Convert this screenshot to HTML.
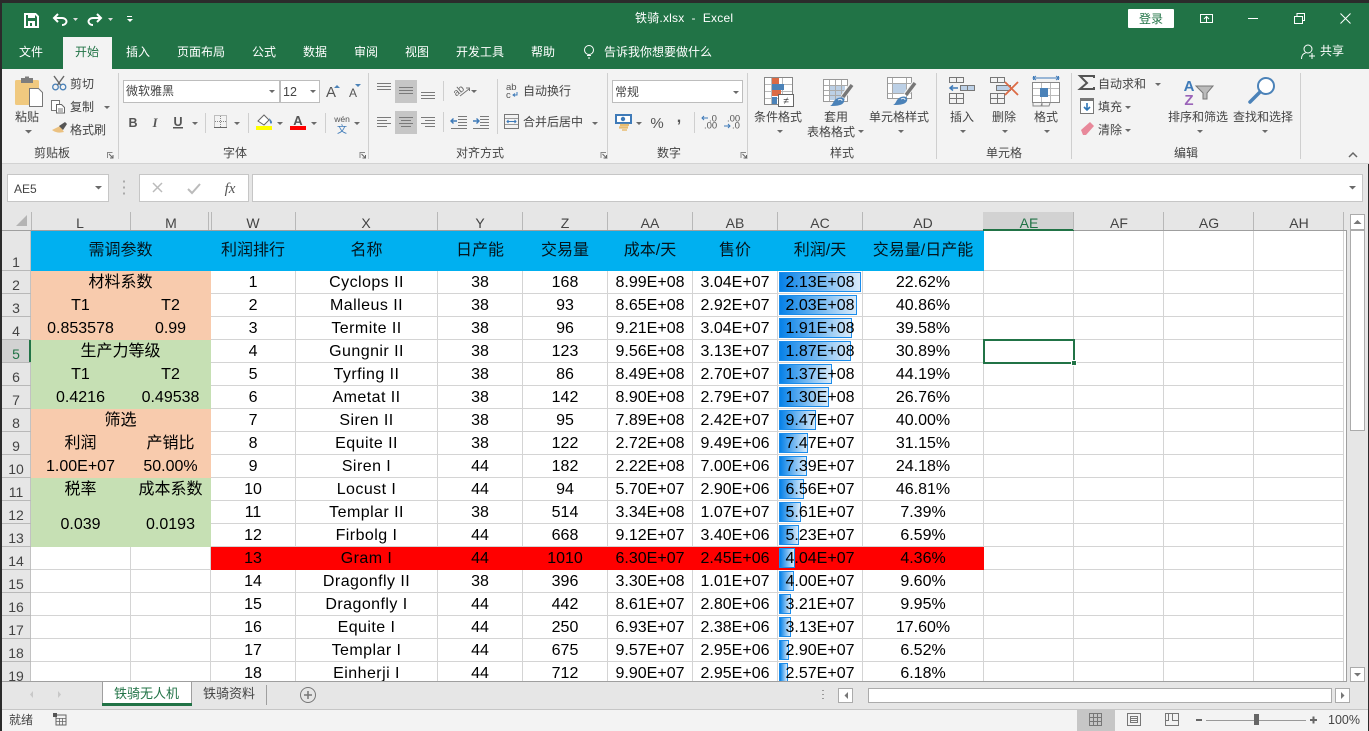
<!DOCTYPE html>
<html lang="zh"><head><meta charset="utf-8"><title>铁骑.xlsx - Excel</title>
<style>
html,body{margin:0;padding:0;width:1369px;height:731px;overflow:hidden;background:#e6e6e6}
body{position:relative;font-family:"Liberation Sans","Noto Sans CJK SC",sans-serif}
svg{position:absolute;left:0;top:0;font-family:"Liberation Sans","Noto Sans CJK SC",sans-serif}
svg text{white-space:pre}
.w{fill:#fff;font-size:12px}
.k{fill:#444;font-size:12px}
.m{text-anchor:middle}
.cr{fill:#6a6a6a}
.ln{stroke:#7a7a7a;stroke-width:1;fill:none}
.hd{fill:#444;font-size:14px;text-anchor:middle}
.rn{fill:#444;font-size:14px;text-anchor:middle}
#sheet{position:absolute;left:31px;top:231px;width:1315px;height:450px;overflow:hidden;background:#fff}
table{border-collapse:separate;border-spacing:0;table-layout:fixed;width:1313px}
td{box-sizing:border-box;height:23px;padding:2px 0 0;border-right:1px solid #d4d4d4;border-bottom:1px solid #d4d4d4;text-align:center;vertical-align:middle;font-size:16px;line-height:20px;color:#000;white-space:nowrap;overflow:visible}
tr:not(.h) td:nth-last-child(11){letter-spacing:.45px}
tr.h td{height:40px;padding-top:1px;background:#00b0f0;border-color:#00b0f0;color:#04141c}
tr.h td.e{background:#fff;border-color:#d4d4d4}
.p{background:#f8cbad;border-color:#f8cbad}
.g{background:#c6e0b4;border-color:#c6e0b4}
tr.r td{background:#f00;border-color:#f00}
tr.r td.e{background:#fff;border-color:#d4d4d4}
td.a{position:relative;isolation:isolate}
td.a i{position:absolute;left:1px;top:1px;height:20px;box-sizing:border-box;border:1px solid #1a8ceb;background:linear-gradient(90deg,#0681e8,#d9ebfa);z-index:-1}
#sel{position:absolute;left:983px;top:339px;width:92px;height:25px;box-sizing:border-box;border:2px solid #217346}
#hdl{position:absolute;left:1071px;top:360px;width:6px;height:6px;background:#217346;border:1px solid #fff;box-sizing:border-box}
</style></head><body>
<svg width="1369" height="731" viewBox="0 0 1369 731">
<!-- frame & title -->
<rect width="1369" height="731" fill="#e6e6e6"/>
<rect x="2" y="3" width="1367" height="66" fill="#217346"/>
<rect x="2" y="69" width="1367" height="94" fill="#f3f3f3"/>
<rect x="2" y="163" width="1367" height="1" fill="#d2d2d2"/>
<!-- QAT -->
<path d="M25 14h10.500l2.500 2.500V27H25z" fill="none" stroke="#fff" stroke-width="2"/><rect x="28" y="14" width="7" height="4" fill="#fff"/><rect x="28" y="21" width="7" height="6" fill="#fff"/><rect x="30" y="23" width="2" height="3" fill="#217346"/>
<path d="M58 14l-4 4 4 4M54 18h8c3 0 4.500 2 4.500 3.500S65 25 62 25" fill="none" stroke="#fff" stroke-width="2"/>
<path d="M73 18h5l-2.500 3z" fill="#ddd"/>
<path d="M97 14l4 4-4 4M101 18h-8c-3 0-4.500 2-4.500 3.500S90 25 93 25" fill="none" stroke="#fff" stroke-width="2"/>
<path d="M108 18h5l-2.500 3z" fill="#ddd"/>
<rect x="127" y="16" width="5" height="1" fill="#fff"/><path d="M127 19h6l-3 3z" fill="#fff"/>
<text x="684" y="22" class="w m" textLength="98">铁骑.xlsx  -  Excel</text>
<rect x="1128" y="9" width="46" height="19" rx="1" fill="#fff"/><text x="1151" y="23" font-size="12" fill="#217346" class="m">登录</text>
<rect x="1200.500" y="14.500" width="12" height="8" fill="none" stroke="#fff"/><path d="M1200 14.500h13M1206.500 22v-5M1204 19l2.500-2.500L1209 19" fill="none" stroke="#fff"/>
<rect x="1248" y="18" width="10" height="1" fill="#fff"/>
<rect x="1294.500" y="16.500" width="8" height="7" fill="none" stroke="#fff"/><path d="M1297 16v-2.500h7.500v7h-2" fill="none" stroke="#fff"/>
<path d="M1340.500 13.500l10 10M1350.500 13.500l-10 10" stroke="#fff" fill="none"/>
<!-- tabs -->
<rect x="63" y="37" width="49" height="32" fill="#f3f3f3"/>
<text x="19" y="56" class="w">文件</text><text x="75" y="56" font-size="12" fill="#217346">开始</text>
<text x="126" y="56" class="w">插入</text><text x="177" y="56" class="w">页面布局</text><text x="252" y="56" class="w">公式</text><text x="303" y="56" class="w">数据</text><text x="354" y="56" class="w">审阅</text><text x="405" y="56" class="w">视图</text><text x="456" y="56" class="w">开发工具</text><text x="531" y="56" class="w">帮助</text>
<circle cx="589" cy="50" r="4.500" fill="none" stroke="#fff"/><path d="M587 55.500h4M588 58h2" stroke="#fff"/>
<text x="604" y="56" class="w">告诉我你想要做什么</text>
<circle cx="1308" cy="49" r="4" fill="none" stroke="#fff"/><path d="M1301.500 59c0-4 2-5.500 4-6M1309 56h6M1312 53v6" fill="none" stroke="#fff"/>
<text x="1320" y="55" class="w">共享</text>
<!-- separators -->
<g fill="#cfcfcf"><rect x="118" y="73" width="1" height="86"/><rect x="368" y="73" width="1" height="86"/><rect x="607" y="73" width="1" height="86"/><rect x="747" y="73" width="1" height="86"/><rect x="936" y="73" width="1" height="86"/><rect x="1071" y="73" width="1" height="86"/><rect x="1300" y="73" width="1" height="86"/>
<rect x="205" y="113" width="1" height="20"/><rect x="248" y="113" width="1" height="20"/><rect x="325" y="113" width="1" height="20"/><rect x="443" y="81" width="1" height="20"/><rect x="443" y="112" width="1" height="20"/><rect x="497" y="79" width="1" height="55"/><rect x="694" y="112" width="1" height="21"/></g>
<!-- group labels -->
<text x="52" y="157" class="k m">剪贴板</text><text x="235" y="157" class="k m">字体</text><text x="480" y="157" class="k m">对齐方式</text><text x="669" y="157" class="k m">数字</text><text x="842" y="157" class="k m">样式</text><text x="1004" y="157" class="k m">单元格</text><text x="1186" y="157" class="k m">编辑</text>
<g fill="none" stroke="#888"><path d="M107.500 158v-5.500h5M601 158v-5.500h5M741 158v-5.500h5M360 158v-5.500h5"/><path d="M109 154l4 4M113 155v3h-3M602.500 154l4 4M606.500 155v3h-3M742.500 154l4 4M746.500 155v3h-3M361.500 154l4 4M365.500 155v3h-3" stroke="#666"/></g>
<!-- clipboard -->
<rect x="15" y="80" width="24" height="25" rx="1.500" fill="#f0c97f"/><rect x="21" y="78" width="12" height="5" fill="#7d7d7d"/><rect x="25" y="76.500" width="4" height="3" fill="#7d7d7d"/>
<path d="M29.500 88.500h9l4 4v14h-13z" fill="#fff" stroke="#777"/>
<text x="27" y="121" class="k m">粘贴</text><path d="M25 130h7l-3.500 3.500z" class="cr"/>
<g fill="none" stroke="#4b82b8" stroke-width="1.300"><circle cx="55.500" cy="87" r="2.800"/><circle cx="63" cy="87" r="2.800"/></g><path d="M54 76l6.500 9M64 76l-6.500 9" stroke="#666" stroke-width="1.400"/>
<text x="70" y="88" class="k">剪切</text>
<rect x="51.500" y="100.500" width="8" height="10" fill="#fff" stroke="#777"/><path d="M56.500 104.500h5l3 3v5.500h-8z" fill="#fff" stroke="#666"/><path d="M58 109h5M58 111h5" stroke="#777"/>
<text x="70" y="111" class="k">复制</text><path d="M104 106h6l-3 3z" class="cr"/>
<path d="M52 130l8-4 4 6c-4 1-8 1-12-2z" fill="#ebc180"/><path d="M59 126l6-4 2 2-4 6z" fill="#555"/>
<text x="70" y="134" class="k">格式刷</text>
<!-- font -->
<rect x="123.500" y="80.500" width="156" height="22" fill="#fff" stroke="#bdbdbd"/><rect x="280.500" y="80.500" width="39" height="22" fill="#fff" stroke="#bdbdbd"/>
<text x="126" y="95" class="k">微软雅黑</text><text x="283" y="96" font-size="12.500" fill="#444">12</text>
<path d="M269 90h6l-3 3zM310 90h6l-3 3z" class="cr"/>
<text x="331" y="97" font-size="15" fill="#555" class="m">A</text><path d="M334 88l3-3 3 3z" fill="#4b82b8"/>
<text x="353" y="97" font-size="12" fill="#555" class="m">A</text><path d="M355 84h6l-3 3z" fill="#4b82b8"/>
<text x="133" y="127" font-size="12.500" font-weight="bold" fill="#555" class="m">B</text>
<text x="155" y="127" font-size="12.500" font-style="italic" font-family="Liberation Serif" font-weight="bold" fill="#555" class="m">I</text>
<text x="178" y="126" font-size="12.500" font-weight="bold" fill="#555" class="m">U</text><rect x="173" y="127" width="10" height="1.500" fill="#555"/>
<path d="M192 122h6l-3 3zM234 122h6l-3 3zM277 122h6l-3 3zM311 122h6l-3 3zM354 122h6l-3 3z" class="cr"/>
<rect x="214.500" y="115.500" width="12" height="12" fill="none" stroke="#888" stroke-dasharray="1 1"/><path d="M220.500 116v12M215 121.500h12" stroke="#888" stroke-dasharray="1 1"/><rect x="214" y="127" width="13" height="1" fill="#666"/>
<path d="M258 121l6-6 5 5-5 5z" fill="#fff" stroke="#666"/><path d="M269 118c2 2 3 3 3 4.500s-2 1.500-2 0z" fill="#4b82b8"/><rect x="256" y="126" width="16" height="4" fill="#ff0"/>
<text x="298" y="125" font-size="13" font-weight="bold" fill="#555" class="m">A</text><rect x="290" y="126" width="16" height="4" fill="#f00"/>
<text x="342" y="122" font-size="8.500" fill="#555" class="m">wén</text><text x="342" y="133" font-size="10" fill="#3e7ab8" class="m">文</text>
<!-- alignment -->
<rect x="395" y="80" width="22" height="23" fill="#c6c6c6"/><rect x="395" y="111" width="22" height="23" fill="#c6c6c6"/>
<path class="ln" d="M377 83.500h14M377 86.500h14M377 89.500h14M399 87.500h14M399 90.500h14M399 93.500h14M421 92.500h14M421 95.500h14M421 98.500h14"/>
<path class="ln" d="M377 117.500h14M377 120.500h10M377 123.500h14M377 126.500h10M399 117.500h14M401 120.500h10M399 123.500h14M401 126.500h10M421 117.500h14M425 120.500h10M421 123.500h14M425 126.500h10"/>
<text x="458" y="94" font-size="10" fill="#666" transform="rotate(-40 458 90)" class="m">ab</text><path d="M460 96l9-7M466 88h3.500v3" fill="none" stroke="#777"/><path d="M471 90h6l-3 3z" class="cr"/>
<path class="ln" d="M458 116.500h9M458 119.500h9M458 122.500h9M458 125.500h9M451 128.500h16M480 116.500h9M480 119.500h9M480 122.500h9M480 125.500h9M473 128.500h16"/>
<path d="M451 121h6M453.500 118.500l-2.500 2.500 2.500 2.500M473 121h6M476.500 118.500l2.500 2.500-2.500 2.500" fill="none" stroke="#3e7ab8" stroke-width="1.400"/>
<text x="506" y="90" font-size="9.500" fill="#555">ab</text><text x="506" y="98" font-size="9.500" fill="#555">c</text><path d="M517 92v3h-4M515 93.500l-2 1.500 2 1.500" fill="none" stroke="#3e7ab8"/>
<text x="523" y="95" class="k">自动换行</text>
<rect x="504.500" y="114.500" width="14" height="14" fill="none" stroke="#777"/><path d="M505 118.500h13M505 124.500h13" stroke="#999"/><path d="M507 121.500h9M508.500 120l-1.500 1.500 1.500 1.500M514.500 120l1.500 1.500-1.500 1.500" fill="none" stroke="#3e7ab8"/>
<text x="523" y="126" class="k">合并后居中</text><path d="M592 122h6l-3 3z" class="cr"/>
<!-- number -->
<rect x="612.500" y="80.500" width="130" height="22" fill="#fff" stroke="#bdbdbd"/><text x="615" y="96" class="k">常规</text><path d="M733 91h6l-3 3z" class="cr"/>
<rect x="616" y="115" width="15" height="8" fill="#fff" stroke="#3e7ab8" stroke-width="2"/><circle cx="623" cy="119" r="2.200" fill="#3e7ab8"/><path d="M620 125h9M619 127.500h9" stroke="#e8bd72" stroke-width="2.200"/><path d="M622 130h5" stroke="#e8bd72" stroke-width="1.500"/>
<path d="M636 122h6l-3 3z" class="cr"/>
<text x="657" y="128" font-size="15" fill="#555" class="m">%</text><text x="679" y="122" font-size="16" font-weight="bold" fill="#555" class="m">,</text>
<text x="709" y="121.500" font-size="9.500" fill="#555">.0</text><text x="704" y="128.500" font-size="9.500" fill="#555">.00</text><path d="M702 118h6M704 116l-2 2 2 2" fill="none" stroke="#3e7ab8"/>
<text x="727" y="121.500" font-size="9.500" fill="#555">.00</text><text x="732" y="128.500" font-size="9.500" fill="#555">.0</text><path d="M724 126h6M728 124l2 2-2 2" fill="none" stroke="#3e7ab8"/>
<!-- styles -->
<rect x="764.500" y="77.500" width="28" height="27" fill="#fff" stroke="#888"/><path d="M771.500 78v26M782.500 78v26M765 84.500h27M765 91.500h27M765 98.500h27" stroke="#bbb"/>
<rect x="772" y="78" width="7" height="6" fill="#dc6a44"/><rect x="772" y="84" width="12" height="6" fill="#4b82b8"/><rect x="772" y="90" width="9" height="6" fill="#dc6a44"/><rect x="772" y="97" width="5" height="7" fill="#4b82b8"/>
<rect x="778.500" y="94.500" width="15" height="12" fill="#fff" stroke="#666"/><text x="786" y="104" font-size="10" fill="#444" class="m">≠</text>
<text x="778" y="121" class="k m">条件格式</text><path d="M777 130h6l-3 3z" class="cr"/>
<rect x="823.500" y="79.500" width="24" height="22" fill="#fff" stroke="#999"/><rect x="829" y="85" width="16" height="15" fill="#bcd0e6"/><path d="M829.500 80v21M835.500 80v21M841.500 80v21M824 85.500h23M824 90.500h23M824 95.500h23" stroke="#aaa"/>
<path d="M851 86l-8 11" stroke="#f3f3f3" stroke-width="5.500"/><path d="M852 85l-9 12" stroke="#777" stroke-width="3.500"/>
<path d="M830 106c3-1 3-5 6-7 3-2 7-2 8 0 1 3-1 5-4 6-3 1-7 1-10 1z" fill="#4b82b8"/><path d="M838 100c2-1 4-1 4 1" stroke="#dfe9f3" fill="none"/>
<text x="836" y="121" class="k m">套用</text><text x="807" y="136" class="k">表格格式</text><path d="M858 130h6l-3 3z" class="cr"/>
<rect x="887.500" y="77.500" width="24" height="21" fill="#fff" stroke="#999"/><path d="M888 83.500h23M892.500 78v20M906.500 78v20M888 93.500h23" stroke="#aaa"/><rect x="893" y="84" width="13" height="9" fill="#bcd0e6"/>
<path d="M914 84l-8 11" stroke="#f3f3f3" stroke-width="5.500"/><path d="M915 83l-9 12" stroke="#777" stroke-width="3.500"/>
<path d="M893 105c3-1 3-5 6-7 3-2 7-2 8 0 1 3-1 5-4 6-3 1-7 1-10 1z" fill="#4b82b8"/><path d="M901 99c2-1 4-1 4 1" stroke="#dfe9f3" fill="none"/>
<text x="899" y="121" class="k m">单元格样式</text><path d="M898 130h6l-3 3z" class="cr"/>
<!-- cells -->
<g fill="none" stroke="#777"><rect x="949.500" y="77.500" width="7" height="5"/><rect x="956.500" y="77.500" width="7" height="5"/><rect x="949.500" y="93.500" width="7" height="5"/><rect x="956.500" y="93.500" width="7" height="5"/><rect x="949.500" y="98.500" width="7" height="5"/><rect x="956.500" y="98.500" width="7" height="5"/></g>
<rect x="960.500" y="85.500" width="14" height="5" fill="#bcd0e6" stroke="#777"/><path d="M967.500 85.500v5" stroke="#777"/><path d="M950 88h8M953 85.500l-3 2.500 3 2.500" fill="none" stroke="#3e7ab8" stroke-width="1.500"/>
<text x="962" y="121" class="k m">插入</text><path d="M960 130h6l-3 3z" class="cr"/>
<g fill="none" stroke="#777"><rect x="990.500" y="77.500" width="7" height="5"/><rect x="997.500" y="77.500" width="7" height="5"/><rect x="990.500" y="93.500" width="7" height="5"/><rect x="997.500" y="93.500" width="7" height="5"/><rect x="990.500" y="98.500" width="7" height="5"/><rect x="997.500" y="98.500" width="7" height="5"/></g>
<rect x="996.500" y="85.500" width="14" height="5" fill="#bcd0e6" stroke="#777"/><path d="M1005 82l13 13M1018 82l-13 13" stroke="#dc6a44" stroke-width="1.800"/>
<text x="1004" y="121" class="k m">删除</text><path d="M1002 130h6l-3 3z" class="cr"/>
<path d="M1033 78h26M1033.500 76v4M1058.500 76v4M1036 76l-3 2 3 2M1056 76l3 2-3 2" stroke="#3e7ab8" fill="none"/><rect x="1032.500" y="82.500" width="27" height="20" fill="#fff" stroke="#888"/><path d="M1041.500 83v19M1050.500 83v19M1033 88.500h26M1033 95.500h26" stroke="#bbb"/><rect x="1040" y="88" width="8" height="9" fill="#4b82b8"/>
<path d="M1033 103v3h8l1-3M1042 103v3h7l1-3" fill="none" stroke="#888"/>
<text x="1046" y="121" class="k m">格式</text><path d="M1044 130h6l-3 3z" class="cr"/>
<!-- editing -->
<path d="M1094 78v-2h-14l7 7-7 6h14v-2" fill="none" stroke="#555" stroke-width="2"/>
<text x="1098" y="88" class="k">自动求和</text><path d="M1155 83h6l-3 3z" class="cr"/>
<rect x="1080.500" y="98.500" width="13" height="15" fill="#fff" stroke="#777"/><rect x="1081" y="98" width="12" height="3" fill="#777"/><path d="M1087 103v7M1084 107l3 3 3-3" fill="none" stroke="#2f75b5" stroke-width="1.600"/>
<text x="1098" y="111" class="k">填充</text><path d="M1125 106h6l-3 3z" class="cr"/>
<path d="M1081 130l9-8 4 4-8 9h-3z" fill="#e8889a"/>
<text x="1098" y="134" class="k">清除</text><path d="M1125 129h6l-3 3z" class="cr"/>
<text x="1189" y="91" font-size="15" font-weight="bold" fill="#3e7ab8" class="m">A</text><text x="1189" y="105" font-size="15" font-weight="bold" fill="#9a63b8" class="m">Z</text>
<path d="M1196 86h17l-6 7v6h-4v-6z" fill="#bbb" stroke="#777"/>
<text x="1198" y="121" class="k m">排序和筛选</text><path d="M1197 130h6l-3 3z" class="cr"/>
<circle cx="1266" cy="86" r="8" fill="#fff" stroke="#4b82b8" stroke-width="2"/><path d="M1260 92l-10 10" stroke="#4b82b8" stroke-width="3.500" stroke-linecap="round"/>
<text x="1263" y="121" class="k m">查找和选择</text><path d="M1262 130h6l-3 3z" class="cr"/>
<path d="M1349 157l4-4 4 4" fill="none" stroke="#666" stroke-width="1.500"/>
<!-- formula bar -->
<rect x="7.500" y="174.500" width="101" height="27" fill="#fff" stroke="#c6c6c6"/><text x="14" y="193" font-size="12" fill="#444">AE5</text><path d="M95 186h7l-3.500 3.500z" class="cr"/>
<path d="M124 180.500v2M124 186.500v2M124 192.500v2" stroke="#aaa" stroke-width="2"/>
<rect x="139.500" y="174.500" width="109" height="27" fill="#fff" stroke="#c6c6c6"/>
<path d="M153 183l9 9M162 183l-9 9" stroke="#bbb" stroke-width="1.500"/><path d="M188 189l4 4 8-9" fill="none" stroke="#bbb" stroke-width="2"/>
<text x="230" y="193" font-size="15" font-style="italic" font-family="Liberation Serif" fill="#555" class="m">fx</text>
<rect x="252.500" y="174.500" width="1110" height="27" fill="#fff" stroke="#c6c6c6"/><path d="M1349 186h7l-3.500 3.500z" class="cr"/>
<!-- headers -->
<path d="M16 226h11v-11z" fill="#b4b4b4"/>
<rect x="983" y="212" width="91" height="18" fill="#d2d2d2"/><rect x="983" y="229" width="91" height="2" fill="#217346"/>
<rect x="2" y="230" width="981" height="1" fill="#9f9f9f"/><rect x="1074" y="230" width="273" height="1" fill="#9f9f9f"/>
<g fill="#b8b8b8"><rect x="31" y="212" width="1" height="18"/><rect x="130" y="212" width="1" height="18"/><rect x="208" y="212" width="1" height="18"/><rect x="211" y="212" width="1" height="18"/><rect x="295" y="212" width="1" height="18"/><rect x="437" y="212" width="1" height="18"/><rect x="522" y="212" width="1" height="18"/><rect x="607" y="212" width="1" height="18"/><rect x="692" y="212" width="1" height="18"/><rect x="777" y="212" width="1" height="18"/><rect x="862" y="212" width="1" height="18"/><rect x="1073" y="212" width="1" height="18"/><rect x="1163" y="212" width="1" height="18"/><rect x="1253" y="212" width="1" height="18"/><rect x="1343" y="212" width="1" height="18"/></g>
<text x="80" y="228" class="hd">L</text><text x="171" y="228" class="hd">M</text><text x="253" y="228" class="hd">W</text><text x="366" y="228" class="hd">X</text><text x="480" y="228" class="hd">Y</text><text x="565" y="228" class="hd">Z</text><text x="650" y="228" class="hd">AA</text><text x="735" y="228" class="hd">AB</text><text x="820" y="228" class="hd">AC</text><text x="923" y="228" class="hd">AD</text><text x="1029" y="228" font-size="14" fill="#217346" class="m">AE</text><text x="1119" y="228" class="hd">AF</text><text x="1209" y="228" class="hd">AG</text><text x="1299" y="228" class="hd">AH</text>
<rect x="2" y="340" width="28" height="22" fill="#d2d2d2"/><rect x="29" y="339" width="2" height="24" fill="#217346"/>
<rect x="30.500" y="231" width="1" height="108" fill="#9f9f9f"/><rect x="30.500" y="363" width="1" height="318" fill="#9f9f9f"/>
<g fill="#b8b8b8"><rect x="2" y="270" width="29" height="1"/><rect x="2" y="293" width="29" height="1"/><rect x="2" y="316" width="29" height="1"/><rect x="2" y="339" width="29" height="1"/><rect x="2" y="362" width="29" height="1"/><rect x="2" y="385" width="29" height="1"/><rect x="2" y="408" width="29" height="1"/><rect x="2" y="431" width="29" height="1"/><rect x="2" y="454" width="29" height="1"/><rect x="2" y="477" width="29" height="1"/><rect x="2" y="500" width="29" height="1"/><rect x="2" y="523" width="29" height="1"/><rect x="2" y="546" width="29" height="1"/><rect x="2" y="569" width="29" height="1"/><rect x="2" y="592" width="29" height="1"/><rect x="2" y="615" width="29" height="1"/><rect x="2" y="638" width="29" height="1"/><rect x="2" y="661" width="29" height="1"/></g>
<text x="16" y="267" class="rn">1</text><text x="16" y="290" class="rn">2</text><text x="16" y="313" class="rn">3</text><text x="16" y="336" class="rn">4</text><text x="16" y="359" font-size="14" fill="#217346" class="m">5</text><text x="16" y="382" class="rn">6</text><text x="16" y="405" class="rn">7</text><text x="16" y="428" class="rn">8</text><text x="16" y="451" class="rn">9</text><text x="16" y="474" class="rn">10</text><text x="16" y="497" class="rn">11</text><text x="16" y="520" class="rn">12</text><text x="16" y="543" class="rn">13</text><text x="16" y="566" class="rn">14</text><text x="16" y="589" class="rn">15</text><text x="16" y="612" class="rn">16</text><text x="16" y="635" class="rn">17</text><text x="16" y="658" class="rn">18</text><text x="16" y="681" class="rn">19</text>
<!-- v scrollbar -->
<rect x="1346" y="231" width="1" height="451" fill="#9f9f9f"/>
<rect x="1350.500" y="214.500" width="14" height="15" fill="#fff" stroke="#ababab"/><path d="M1353.500 224l4-4 4 4z" fill="#777"/>
<rect x="1350.500" y="230.500" width="14" height="200" fill="#fff" stroke="#ababab"/>
<rect x="1350.500" y="667.500" width="14" height="14" fill="#fff" stroke="#ababab"/><path d="M1354 673h7l-3.500 3.500z" fill="#777"/>
<rect x="1368" y="164" width="1" height="567" fill="#2b2b2b"/>
<!-- bottom -->
<rect x="2" y="682" width="1366" height="27" fill="#e6e6e6"/><rect x="2" y="681" width="1345" height="1" fill="#9f9f9f"/>
<path d="M33 691v7l-3-3.500zM58 691v7l3-3.500z" fill="#c8c8c8"/>
<path d="M102.500 682v22" stroke="#9f9f9f"/><rect x="103" y="682" width="88" height="21" fill="#fff"/><path d="M191.500 682v22" stroke="#9f9f9f"/><rect x="102" y="703" width="90" height="3" fill="#217346"/>
<text x="146.500" y="698" font-size="13" fill="#217346" class="m">铁骑无人机</text>
<text x="229" y="698" font-size="13" fill="#444" class="m">铁骑资料</text><rect x="266" y="685" width="1" height="20" fill="#9f9f9f"/>
<circle cx="308" cy="695" r="7.500" fill="none" stroke="#777"/><path d="M304 695h8M308 691v8" stroke="#777" stroke-width="1.500"/>
<path d="M823 690v1M823 694v1M823 698v1" stroke="#999" stroke-width="2"/>
<rect x="838.500" y="688.500" width="14" height="14" fill="#fff" stroke="#ababab"/><path d="M848 692v7l-3.500-3.500z" fill="#777"/>
<rect x="868.500" y="688.500" width="463" height="14" fill="#fff" stroke="#ababab"/>
<rect x="1335.500" y="688.500" width="14" height="14" fill="#fff" stroke="#ababab"/><path d="M1341 692v7l3.500-3.500z" fill="#777"/>
<rect x="2" y="709" width="1366" height="22" fill="#f3f3f3"/><rect x="2" y="709" width="1366" height="1" fill="#c6c6c6"/>
<text x="9" y="724" class="k">就绪</text>
<rect x="56" y="715" width="10" height="10" fill="none" stroke="#666"/><path d="M56 718.500h10M59.500 718v7M62.500 718v7M56 721.500h10" stroke="#666" stroke-width=".8"/><rect x="53" y="713" width="4" height="4" fill="#555"/>
<rect x="1077" y="710" width="38" height="21" fill="#c6c6c6"/>
<path d="M1089.500 713.500h12v12h-12zM1093.500 714v12M1097.500 714v12M1090 717.500h12M1090 721.500h12" fill="none" stroke="#777"/>
<rect x="1127.500" y="713.500" width="13" height="12" fill="none" stroke="#777"/><path d="M1130.500 716.500h7v6h-7zM1131 718.500h6M1131 720.500h6" fill="none" stroke="#777"/>
<path d="M1165.500 713.500h13v12h-13zM1165.500 720.500h3v-7M1178.500 720.500h-6v-7" fill="none" stroke="#777"/>
<rect x="1196" y="719" width="6" height="2" fill="#666"/><rect x="1206" y="720" width="100" height="1" fill="#999"/><rect x="1254" y="714" width="5" height="11" fill="#666"/>
<path d="M1310 720h7M1313.500 716.500v7" stroke="#666" stroke-width="2"/>
<text x="1344" y="724" font-size="12.500" fill="#444" class="m">100%</text>
<!-- window edge -->
<rect width="1369" height="3" fill="#2b2b2b"/><rect width="2" height="731" fill="#2b2b2b"/>
</svg>

<div id="sheet"><table>
<colgroup><col style="width:100px"><col style="width:80px"><col style="width:85px"><col style="width:142px"><col style="width:85px"><col style="width:85px"><col style="width:85px"><col style="width:85px"><col style="width:85px"><col style="width:121px"><col style="width:90px"><col style="width:90px"><col style="width:90px"><col style="width:90px"></colgroup>
<tr class="h"><td colspan="2">需调参数</td><td>利润排行</td><td>名称</td><td>日产能</td><td>交易量</td><td>成本/天</td><td>售价</td><td>利润/天</td><td>交易量/日产能</td><td class="e"></td><td class="e"></td><td class="e"></td><td class="e"></td></tr>
<tr><td class="p" colspan="2">材料系数</td><td>1</td><td>Cyclops II</td><td>38</td><td>168</td><td>8.99E+08</td><td>3.04E+07</td><td class="a"><i style="width:82px"></i>2.13E+08</td><td>22.62%</td><td></td><td></td><td></td><td></td></tr>
<tr><td class="p">T1</td><td class="p">T2</td><td>2</td><td>Malleus II</td><td>38</td><td>93</td><td>8.65E+08</td><td>2.92E+07</td><td class="a"><i style="width:78px"></i>2.03E+08</td><td>40.86%</td><td></td><td></td><td></td><td></td></tr>
<tr><td class="p">0.853578</td><td class="p">0.99</td><td>3</td><td>Termite II</td><td>38</td><td>96</td><td>9.21E+08</td><td>3.04E+07</td><td class="a"><i style="width:73px"></i>1.91E+08</td><td>39.58%</td><td></td><td></td><td></td><td></td></tr>
<tr><td class="g" colspan="2">生产力等级</td><td>4</td><td>Gungnir II</td><td>38</td><td>123</td><td>9.56E+08</td><td>3.13E+07</td><td class="a"><i style="width:72px"></i>1.87E+08</td><td>30.89%</td><td></td><td></td><td></td><td></td></tr>
<tr><td class="g">T1</td><td class="g">T2</td><td>5</td><td>Tyrfing II</td><td>38</td><td>86</td><td>8.49E+08</td><td>2.70E+07</td><td class="a"><i style="width:53px"></i>1.37E+08</td><td>44.19%</td><td></td><td></td><td></td><td></td></tr>
<tr><td class="g">0.4216</td><td class="g">0.49538</td><td>6</td><td>Ametat II</td><td>38</td><td>142</td><td>8.90E+08</td><td>2.79E+07</td><td class="a"><i style="width:50px"></i>1.30E+08</td><td>26.76%</td><td></td><td></td><td></td><td></td></tr>
<tr><td class="p" colspan="2">筛选</td><td>7</td><td>Siren II</td><td>38</td><td>95</td><td>7.89E+08</td><td>2.42E+07</td><td class="a"><i style="width:37px"></i>9.47E+07</td><td>40.00%</td><td></td><td></td><td></td><td></td></tr>
<tr><td class="p">利润</td><td class="p">产销比</td><td>8</td><td>Equite II</td><td>38</td><td>122</td><td>2.72E+08</td><td>9.49E+06</td><td class="a"><i style="width:29px"></i>7.47E+07</td><td>31.15%</td><td></td><td></td><td></td><td></td></tr>
<tr><td class="p">1.00E+07</td><td class="p">50.00%</td><td>9</td><td>Siren I</td><td>44</td><td>182</td><td>2.22E+08</td><td>7.00E+06</td><td class="a"><i style="width:28px"></i>7.39E+07</td><td>24.18%</td><td></td><td></td><td></td><td></td></tr>
<tr><td class="g">税率</td><td class="g">成本系数</td><td>10</td><td>Locust I</td><td>44</td><td>94</td><td>5.70E+07</td><td>2.90E+06</td><td class="a"><i style="width:25px"></i>6.56E+07</td><td>46.81%</td><td></td><td></td><td></td><td></td></tr>
<tr><td class="g" rowspan="2">0.039</td><td class="g" rowspan="2">0.0193</td><td>11</td><td>Templar II</td><td>38</td><td>514</td><td>3.34E+08</td><td>1.07E+07</td><td class="a"><i style="width:22px"></i>5.61E+07</td><td>7.39%</td><td></td><td></td><td></td><td></td></tr>
<tr><td>12</td><td>Firbolg I</td><td>44</td><td>668</td><td>9.12E+07</td><td>3.40E+06</td><td class="a"><i style="width:20px"></i>5.23E+07</td><td>6.59%</td><td></td><td></td><td></td><td></td></tr>
<tr class="r"><td class="e"></td><td class="e"></td><td>13</td><td>Gram I</td><td>44</td><td>1010</td><td>6.30E+07</td><td>2.45E+06</td><td class="a"><i style="width:16px"></i>4.04E+07</td><td>4.36%</td><td class="e"></td><td class="e"></td><td class="e"></td><td class="e"></td></tr>
<tr><td></td><td></td><td>14</td><td>Dragonfly II</td><td>38</td><td>396</td><td>3.30E+08</td><td>1.01E+07</td><td class="a"><i style="width:15px"></i>4.00E+07</td><td>9.60%</td><td></td><td></td><td></td><td></td></tr>
<tr><td></td><td></td><td>15</td><td>Dragonfly I</td><td>44</td><td>442</td><td>8.61E+07</td><td>2.80E+06</td><td class="a"><i style="width:12px"></i>3.21E+07</td><td>9.95%</td><td></td><td></td><td></td><td></td></tr>
<tr><td></td><td></td><td>16</td><td>Equite I</td><td>44</td><td>250</td><td>6.93E+07</td><td>2.38E+06</td><td class="a"><i style="width:12px"></i>3.13E+07</td><td>17.60%</td><td></td><td></td><td></td><td></td></tr>
<tr><td></td><td></td><td>17</td><td>Templar I</td><td>44</td><td>675</td><td>9.57E+07</td><td>2.95E+06</td><td class="a"><i style="width:10px"></i>2.90E+07</td><td>6.52%</td><td></td><td></td><td></td><td></td></tr>
<tr><td></td><td></td><td>18</td><td>Einherji I</td><td>44</td><td>712</td><td>9.90E+07</td><td>2.95E+06</td><td class="a"><i style="width:9px"></i>2.57E+07</td><td>6.18%</td><td></td><td></td><td></td><td></td></tr>
</table></div>
<div id="sel"></div><div id="hdl"></div>
</body></html>
